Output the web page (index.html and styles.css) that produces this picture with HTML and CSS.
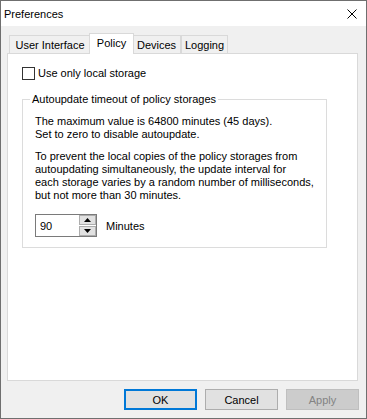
FILE: index.html
```html
<!DOCTYPE html>
<html lang="en">
<head>
  <meta charset="UTF-8">
  <title>Preferences</title>
  <link rel="stylesheet" href="styles.css">
</head>
<body>

  <div class="window">
    <div class="titlebar">
      <span class="title">Preferences</span>
      <svg class="close" width="10" height="10" viewBox="0 0 10 10">
        <path d="M0.5 0.5L9.5 9.5M9.5 0.5L0.5 9.5" stroke="#000" stroke-width="1" fill="none"/>
      </svg>
    </div>

    <div class="client">
      <div class="tabs">
        <div class="tab tab-ui">User Interface</div>
        <div class="tab tab-policy active">Policy</div>
        <div class="tab tab-devices">Devices</div>
        <div class="tab tab-logging">Logging</div>
      </div>

      <div class="panel">
        <label class="check"><span class="box"></span>Use only local storage</label>

        <fieldset class="group">
          <legend>Autoupdate timeout of policy storages</legend>
          <p>The maximum value is 64800 minutes (45 days).<br>Set to zero to disable autoupdate.</p>
          <p>To prevent the local copies of the policy storages from<br>autoupdating simultaneously, the update interval for<br>each storage varies by a random number of milliseconds,<br>but not more than 30 minutes.</p>

          <div class="spin-row">
            <div class="spin">
              <span class="spin-value">90</span>
              <div class="spin-buttons">
                <span class="spin-btn">
                  <svg width="7" height="4" viewBox="0 0 7 4"><path d="M3.5 0L7 4H0Z" fill="#000"/></svg>
                </span>
                <span class="spin-btn">
                  <svg width="7" height="4" viewBox="0 0 7 4"><path d="M0 0H7L3.5 4Z" fill="#000"/></svg>
                </span>
              </div>
            </div>
            <span>Minutes</span>
          </div>
        </fieldset>
      </div>

      <div class="buttons">
        <button class="btn default">OK</button>
        <button class="btn">Cancel</button>
        <button class="btn" disabled>Apply</button>
      </div>
    </div>
  </div>

</body>
</html>
```

FILE: styles.css
```css
/* General Reset */
* {
  margin: 0;
  padding: 0;
  box-sizing: border-box;
}

body {
  font-family: 'Liberation Sans', Arial, sans-serif;
  font-size: 11px;
  color: #000;
  background-color: #fff;
}

/* Window frame */
.window {
  width: 367px;
  height: 419px;
  border: 1px solid #6f6f6f;
  background-color: #f0f0f0;
  display: flex;
  flex-direction: column;
}

.titlebar {
  height: 25px;
  background-color: #fff;
  display: flex;
  align-items: center;
  justify-content: space-between;
  padding: 0 9px 0 3px;
  font-size: 11px;
}

.client {
  flex: 1;
  display: flex;
  flex-direction: column;
  padding: 7px 0 0 6px;
}

/* Tabs */
.tabs {
  display: flex;
  align-items: flex-end;
  margin-left: 2px;
  margin-bottom: -1px;
  position: relative;
  z-index: 1;
}

.tab {
  height: 18px;
  margin-bottom: 1px;
  border: 1px solid #d9d9d9;
  border-bottom: none;
  background-color: #f0f0f0;
  text-align: center;
  padding-top: 2px;
  line-height: 15px;
  white-space: nowrap;
}

.tab.active {
  height: 21px;
  margin: 0 -2px;
  background-color: #fff;
  position: relative;
  z-index: 1;
}

.tab-ui { width: 82px; }
.tab-policy { width: 45px; }
.tab-devices { width: 49px; }
.tab-logging { width: 47px; }

/* Tab page */
.panel {
  height: 328px;
  margin-right: 8px;
  background-color: #fff;
  border: 1px solid #d9d9d9;
  padding: 13px 0 0 14px;
}

.check {
  display: flex;
  align-items: center;
  gap: 3px;
  height: 13px;
  line-height: 13px;
}

.check .box {
  width: 13px;
  height: 13px;
  border: 1px solid #333;
  background-color: #fff;
}

/* Group box */
.group {
  width: 305px;
  margin-top: 12px;
  border: 1px solid #dcdcdc;
  padding: 8px 0 10px 12px;
}

.group legend {
  margin-left: -5px;
  padding: 0 2px;
  line-height: 15px;
}

.group p {
  line-height: 13px;
  white-space: nowrap;
}

.group p + p {
  margin-top: 9px;
}

/* Numeric up-down */
.spin-row {
  display: flex;
  align-items: center;
  gap: 9px;
  margin-top: 12px;
}

.spin {
  width: 62px;
  height: 23px;
  border: 1px solid #7a7a7a;
  background-color: #fff;
  display: flex;
  align-items: center;
  justify-content: space-between;
}

.spin-value {
  padding-left: 4px;
}

.spin-buttons {
  display: flex;
  flex-direction: column;
  gap: 1px;
  align-self: stretch;
}

.spin-btn {
  flex: 1;
  width: 17px;
  background-color: #e1e1e1;
  border: 1px solid #adadad;
  display: flex;
  align-items: center;
  justify-content: center;
}

/* Dialog buttons */
.buttons {
  display: flex;
  justify-content: flex-end;
  gap: 8px;
  margin-top: 8px;
  padding-right: 7px;
}

.btn {
  width: 73px;
  height: 21px;
  font-family: inherit;
  font-size: 11px;
  color: #000;
  background-color: #e1e1e1;
  border: 1px solid #adadad;
}

.btn.default {
  border: 2px solid #0078d7;
}

.btn:disabled {
  color: #838383;
  background-color: #ccc;
  border-color: #bfbfbf;
}
```
